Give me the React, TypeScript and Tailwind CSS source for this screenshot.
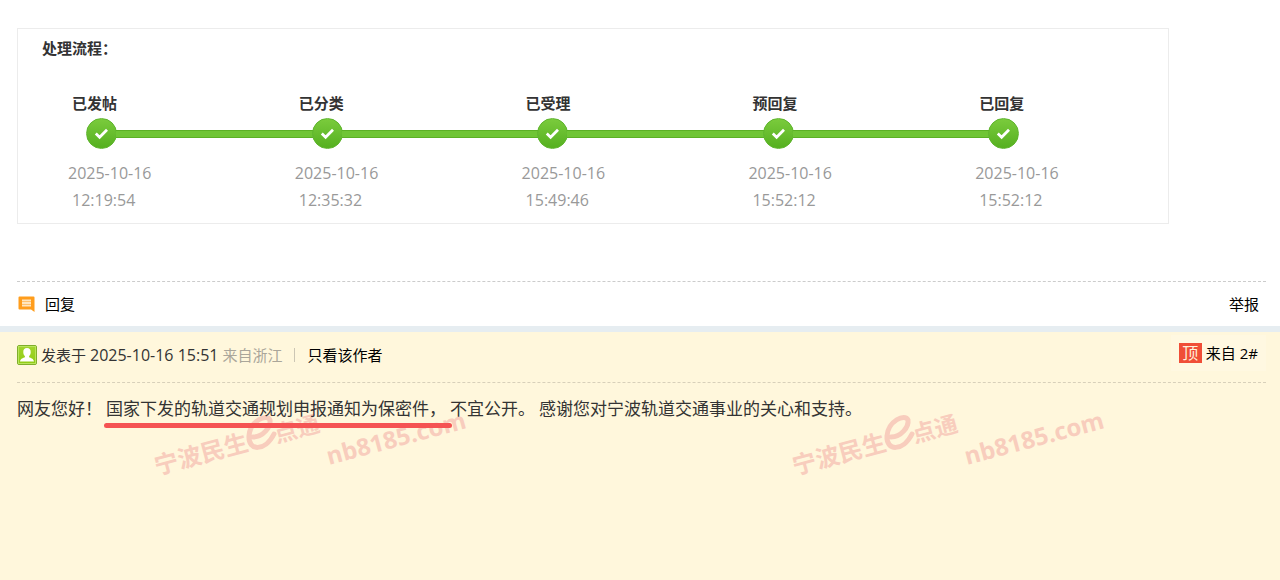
import React from 'react';

interface Step {
    title: string;
    date: string;
    time: string;
}

const steps: Step[] = [
    { title: '已发帖', date: '2025-10-16', time: '12:19:54' },
    { title: '已分类', date: '2025-10-16', time: '12:35:32' },
    { title: '已受理', date: '2025-10-16', time: '15:49:46' },
    { title: '预回复', date: '2025-10-16', time: '15:52:12' },
    { title: '已回复', date: '2025-10-16', time: '15:52:12' },
];

const CheckDot: React.FC = () => (
    <span className="flex h-[31px] w-[31px] shrink-0 items-center justify-center rounded-full border border-[#5fb52e] bg-linear-to-b from-[#7acb3c] to-[#55b01f]">
        <svg width="15" height="13" viewBox="0 0 15 13" fill="none" aria-hidden="true">
            <path d="M1.8 6.6L5.6 10.2L13 2.8" stroke="#fff" strokeWidth="2.8" />
        </svg>
    </span>
);

const ReplyIcon: React.FC = () => (
    <svg width="18" height="16" viewBox="0 0 18 16" aria-hidden="true">
        <path d="M2.5 0.5H16.5Q17.5 0.5 17.5 1.5V16L14 13.5H2.5Q1.5 13.5 1.5 12.5V1.5Q1.5 0.5 2.5 0.5Z" fill="#ff9d1c" />
        <path d="M5 4.4H14M5 7H14M5 9.6H14" stroke="#ffe6bf" strokeWidth="2" />
    </svg>
);

const UserIcon: React.FC = () => (
    <svg width="20" height="20" viewBox="0 0 20 20" aria-hidden="true">
        <defs>
            <linearGradient id="user-bg" x1="0" y1="0" x2="0" y2="1">
                <stop offset="0" stopColor="#a3d52f" />
                <stop offset="1" stopColor="#8fcb12" />
            </linearGradient>
        </defs>
        <rect x="0.5" y="0.5" width="19" height="19" rx="1.5" fill="url(#user-bg)" stroke="#7fae2c" />
        <rect x="1.5" y="1.5" width="17" height="17" fill="none" stroke="#b9e45c" />
        <path d="M10 3C12.6 3 13.9 4.8 13.7 7.4C13.6 9.2 12.9 10.2 12.1 11V12.3C13.8 13.1 16.6 13.6 17 16.5H3C3.4 13.6 6.2 13.1 7.9 12.3V11C7.1 10.2 6.4 9.2 6.3 7.4C6.1 4.8 7.4 3 10 3Z" fill="#fff" />
    </svg>
);

const Watermark: React.FC = () => (
    <svg className="w-[638px] shrink-0" height="110" viewBox="0 0 638 110" fill="#f8cdbd" aria-hidden="true">
        <g transform="translate(157 95) rotate(-15)" fontWeight="700">
            <text x="0" y="0" fontSize="24">宁波民生</text>
            <text x="124" y="0" fontSize="23">点通</text>
        </g>
        {/* swoosh e between the two words */}
        <path d="M253 57C263 57 271 47 270 40C267 33 250 41 249 56C248 71 265 72 274 54" fill="none" stroke="#f8cdbd" strokeWidth="5" strokeLinecap="round" />
        <text transform="translate(329 85) rotate(-15)" x="0" y="0" fontSize="24" fontWeight="700">nb8185.com</text>
    </svg>
);

const ProcessCard: React.FC = () => (
    <section className="mt-7 ml-[17px] h-[196px] w-[90%] border border-[#ececec]">
        <h2 className="mt-[7px] ml-6 text-[15px] leading-6 font-bold">处理流程：</h2>
        <div className="mt-[31px] grid grid-cols-5 pr-4">
            {steps.map((step) => (
                <h3 key={step.title} className="pl-[54px] text-[15px] leading-6 font-bold">{step.title}</h3>
            ))}
        </div>
        <div className="mt-[3px] mr-[149px] ml-[68px] flex items-center">
            {steps.map((step, i) => (
                <React.Fragment key={step.title}>
                    {i > 0 && <span className="-mx-px h-2 flex-1 border-y border-[#5bb025] bg-[#6fc535]" />}
                    <CheckDot />
                </React.Fragment>
            ))}
        </div>
        <div className="mt-[11px] grid grid-cols-5 pr-4 text-base leading-[27px] text-[#999]">
            {steps.map((step) => (
                <div key={step.title} className="pl-[50px]">
                    <p>{step.date}</p>
                    <p className="pl-1">{step.time}</p>
                </div>
            ))}
        </div>
    </section>
);

const App: React.FC = () => {
    return (
        <div className="flex min-h-screen flex-col bg-white font-['Open_Sans','Noto_Sans_CJK_SC',sans-serif] text-[15px] text-[#333]" lang="zh-CN">
            <ProcessCard />

            <div className="mt-[57px] mr-[14px] ml-[17px] flex h-[45px] items-center justify-between border-t border-dashed border-[#ccc] pr-[7px] text-black">
                <button type="button" className="flex items-center gap-[10px]">
                    <ReplyIcon />
                    回复
                </button>
                <a href="#report">举报</a>
            </div>

            <article className="relative flex-1 overflow-hidden border-t-[6px] border-[#e6edf1] bg-[#fff7dc]">
                {/* repeated site mark behind the post */}
                <div className="absolute top-12 left-0 flex">
                    <Watermark />
                    <Watermark />
                </div>

                <header className="relative mr-[14px] ml-[17px] flex h-[51px] items-center justify-between border-b border-dashed border-[#d8d0ba] pb-1">
                    <div className="flex items-center gap-1">
                        <UserIcon />
                        <span>发表于</span>
                        <time className="text-base">2025-10-16 15:51</time>
                        <span className="text-[#aaa69a]">来自浙江</span>
                        <span className="mx-2 h-[14px] w-px bg-[#ccc6b4]" />
                        <a href="#author" className="text-black">只看该作者</a>
                    </div>
                    <div className="mb-1 flex h-9 items-center gap-1 bg-[#fff8e1] px-2 text-black">
                        <button type="button" className="h-5 w-[23px] bg-[#f04e37] text-base leading-5 text-[#fff0dc]">顶</button>
                        <a href="#floor-2">来自 2#</a>
                    </div>
                </header>

                <p className="relative mx-[17px] mt-3 flex flex-wrap gap-x-1 text-[17px] leading-7">
                    <span>网友您好！</span>
                    <mark className="relative bg-transparent text-inherit">
                        国家下发的轨道交通规划申报通知为保密件，
                        <span className="absolute -right-1.5 -bottom-[5px] -left-0.5 h-[5px] rounded-full bg-[#f55353]" />
                    </mark>
                    <span>不宜公开。</span>
                    <span>感谢您对宁波轨道交通事业的关心和支持。</span>
                </p>
            </article>
        </div>
    );
};

export default App;
